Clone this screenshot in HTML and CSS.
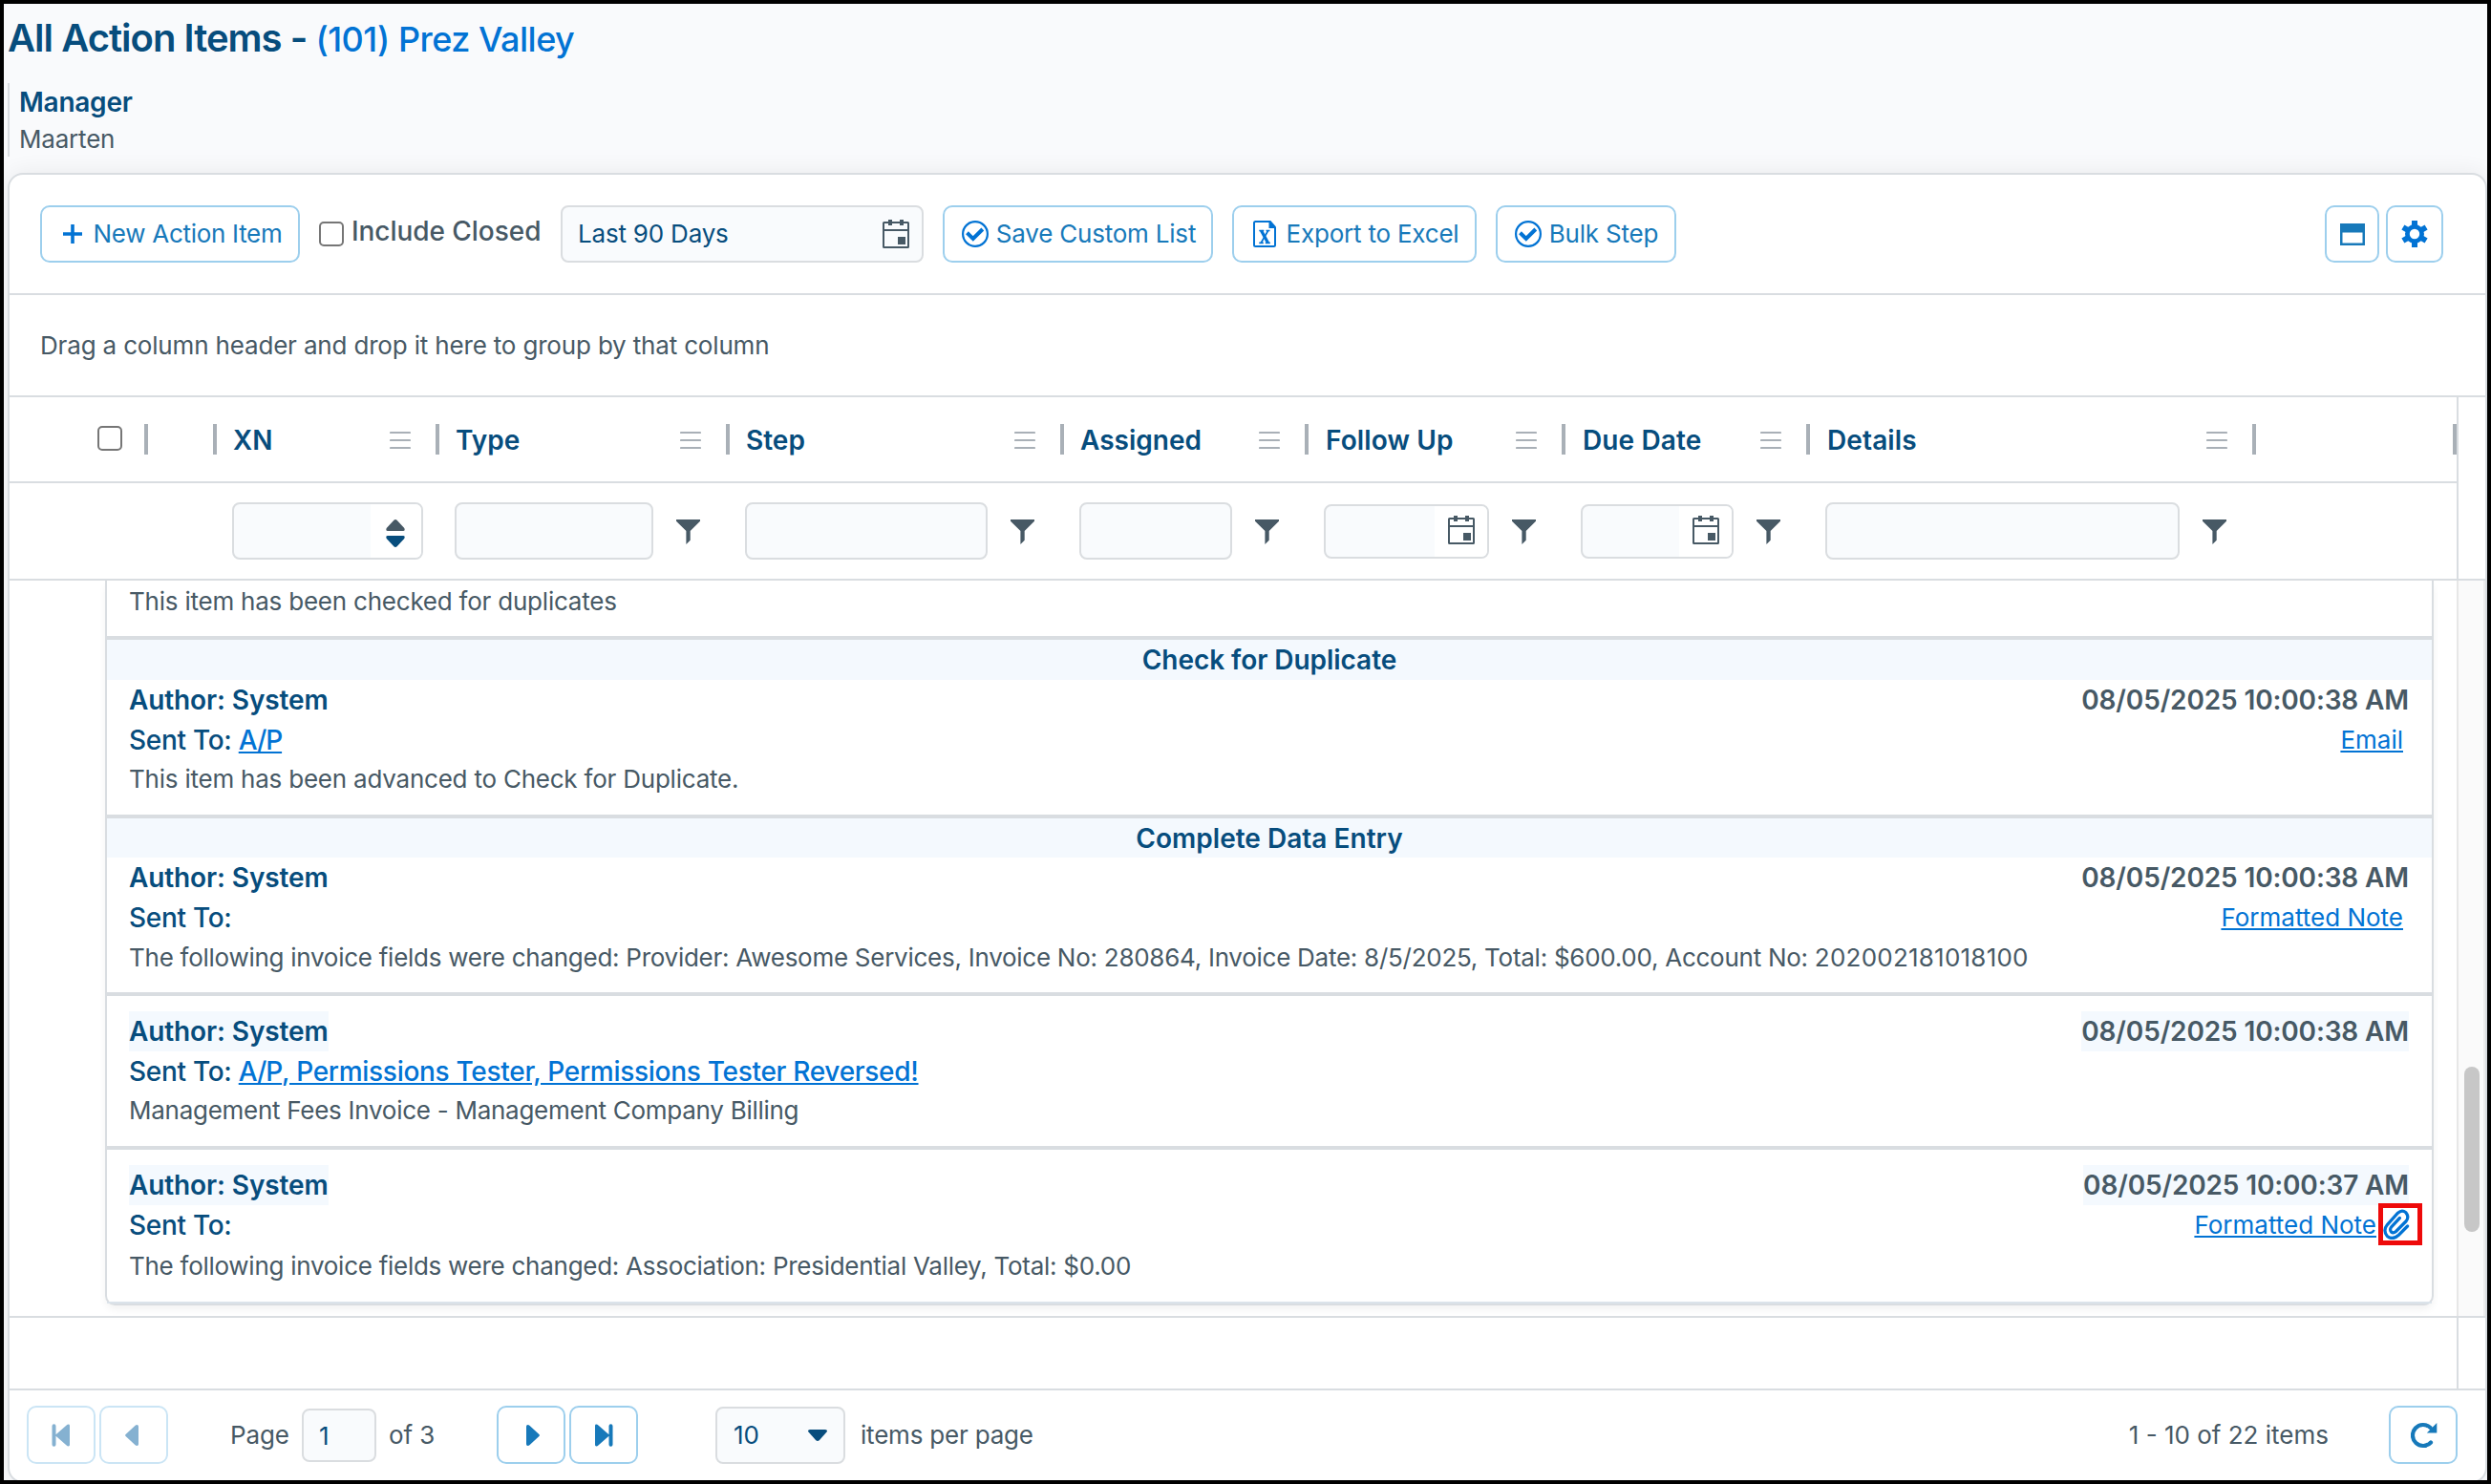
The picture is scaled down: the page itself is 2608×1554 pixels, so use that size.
FILE: index.html
```html
<!DOCTYPE html>
<html lang="en">
<head>
<meta charset="utf-8">
<title>All Action Items</title>
<link rel="stylesheet" href="styles.css">
</head>
<body>
<svg class="defs" width="0" height="0">
  <defs>
    <symbol id="cal" viewBox="0 0 28 30"><path fill-rule="evenodd" d="M1.6 2H6V0h4v2h8V0h4v2h4.4A1.6 1.6 0 0 1 28 3.600V28.400A1.600 1.600 0 0 1 26.400 30H1.600A1.600 1.600 0 0 1 0 28.400V3.600A1.600 1.600 0 0 1 1.600 2zM2 4v6h24V4h-4v2h-4V4h-8v2H6V4zM2 12v16h24V12z"/><path d="M16 18h8v8h-8z"/></symbol>
    <symbol id="check" viewBox="0 0 28 28"><circle cx="14" cy="14" r="12.900" fill="none" stroke="currentColor" stroke-width="2.200"/><path d="M5.500 12.800l6.300 6.200L21.800 9" fill="none" stroke="currentColor" stroke-width="4"/></symbol>
    <symbol id="menu" viewBox="0 0 22 20"><path d="M1 2h20M1 10h20M1 18h20" fill="none" stroke="currentColor" stroke-width="2.200" stroke-linecap="round"/></symbol>
    <symbol id="funnel" viewBox="0 0 25 26"><path d="M0 0h25v1.800L14.700 12v9.700L10.400 26V12L0 1.800z"/></symbol>
    <symbol id="tri" viewBox="0 0 14 22"><path d="M0 1.800Q0 0 1.600 0Q2.600 0 3.400.8L13.400 10q1 1 0 2L3.400 21.200Q2.600 22 1.600 22Q0 22 0 20.200z"/></symbol>
    <symbol id="end" viewBox="0 0 20 24"><path d="M0 2Q0 .6 1.300.6Q2.500.6 3.400 1.600L14.500 11.200V2.200a2 2 0 0 1 4 0v19.600a2 2 0 0 1-4 0v-9L3.400 22.400Q2.500 23.400 1.300 23.400Q0 23.400 0 22z"/></symbol>
  </defs>
</svg>
<div class="page">
  <header class="head">
    <h1 class="title">All Action Items - <span class="title-link">(101) Prez Valley</span></h1>
    <div class="manager"><div class="manager-label">Manager</div><div class="manager-name">Maarten</div></div>
  </header>
  <main class="card">
    <div class="toolbar">
      <button class="btn new"><svg width="20" height="20" viewBox="0 0 20 20"><path d="M8.200 0h3.600v8.200H20v3.600h-8.200V20H8.200v-8.200H0V8.200h8.200z"/></svg><span>New Action Item</span></button>
      <label class="include"><i class="box"></i><span>Include Closed</span></label>
      <div class="range"><span>Last 90 Days</span><svg width="28" height="30"><use href="#cal"/></svg></div>
      <button class="btn save"><svg width="28" height="28"><use href="#check"/></svg><span>Save Custom List</span></button>
      <button class="btn export"><svg width="24" height="28" viewBox="0 0 24 28"><path d="M17 1H2.500Q1 1 1 2.500v23Q1 27 2.500 27h19q1.500 0 1.500-1.500V8" fill="none" stroke="currentColor" stroke-width="2"/><path d="M16.500 0h1.800L24 6.500V8h-7.500z"/><path d="M8.500 10.500l7 12.800" fill="none" stroke="currentColor" stroke-width="3.200"/><path d="M6.300 10.500h5M13.500 10.500h4M6.300 23.300h4.500M12.800 23.300h5M15.700 10.500L8.300 23.300" fill="none" stroke="currentColor" stroke-width="1.700"/></svg><span>Export to Excel</span></button>
      <button class="btn bulk"><svg width="28" height="28"><use href="#check"/></svg><span>Bulk Step</span></button>
      <button class="btn window"><svg width="26" height="23" viewBox="0 0 26 23"><path fill-rule="evenodd" d="M0 0h26v23H0zM2.500 9.500v11h21v-11z"/></svg></button>
      <button class="btn gear"><svg width="28" height="28" viewBox="0 0 28 28"><circle cx="14" cy="14" r="7.600" fill="none" stroke="currentColor" stroke-width="4.800"/><g fill="none" stroke="currentColor" stroke-width="6" stroke-linejoin="round"><path d="M14 0v7M14 28v-7M1.900 7l6 3.500M26.100 21l-6-3.500M26.100 7l-6 3.500M1.900 21l6-3.500"/></g></svg></button>
    </div>
    <div class="group-row">Drag a column header and drop it here to group by that column</div>
    <div class="grid-head">
      <div class="cols headers">
        <div class="th th-check"><i class="box"></i></div>
        <div class="th"></div>
        <div class="th"><span>XN</span><svg width="22" height="20"><use href="#menu"/></svg></div>
        <div class="th"><span>Type</span><svg width="22" height="20"><use href="#menu"/></svg></div>
        <div class="th"><span>Step</span><svg width="22" height="20"><use href="#menu"/></svg></div>
        <div class="th"><span>Assigned</span><svg width="22" height="20"><use href="#menu"/></svg></div>
        <div class="th wide"><span>Follow Up</span><svg width="22" height="20"><use href="#menu"/></svg></div>
        <div class="th wide"><span>Due Date</span><svg width="22" height="20"><use href="#menu"/></svg></div>
        <div class="th wide"><span>Details</span><svg width="22" height="20"><use href="#menu"/></svg></div>
        <div class="th"></div>
      </div>
      <div class="cols filters">
        <div></div><div></div>
        <div class="td number"><div class="field"><div class="addon"><svg width="20" height="30" viewBox="0 0 20 30"><path d="M10 0q1 0 1.600.8L19.300 9Q20.500 12 18 12H2Q-.5 12 .7 9L8.400.8Q9 0 10 0z"/><path class="navy" d="M10 29q-1 0-1.600-.8L.7 20Q-.5 17 2 17h16q2.500 0 1.300 3l-7.700 8.200Q11 29 10 29z"/></svg></div></div></div>
        <div class="td"><div class="field"></div><svg width="25" height="26"><use href="#funnel"/></svg></div>
        <div class="td"><div class="field"></div><svg width="25" height="26"><use href="#funnel"/></svg></div>
        <div class="td"><div class="field"></div><svg width="25" height="26"><use href="#funnel"/></svg></div>
        <div class="td"><div class="field date"><div class="addon"><svg width="28" height="30"><use href="#cal"/></svg></div></div><svg width="25" height="26"><use href="#funnel"/></svg></div>
        <div class="td"><div class="field date"><div class="addon"><svg width="28" height="30"><use href="#cal"/></svg></div></div><svg width="25" height="26"><use href="#funnel"/></svg></div>
        <div class="td"><div class="field"></div><svg width="25" height="26"><use href="#funnel"/></svg></div>
        <div></div>
      </div>
    </div>
    <div class="content">
      <div class="notes">
        <section class="note first"><p class="body">This item has been checked for duplicates</p></section>
        <section class="note">
          <h2 class="step">Check for Duplicate</h2>
          <div class="row"><span class="author">Author: System</span><span class="date-text">08/05/2025 10:00:38 AM</span></div>
          <div class="row"><span class="sent">Sent To: <a><span class="ap">A/P</span></a></span><a class="kind">Email</a></div>
          <p class="body">This item has been advanced to Check for Duplicate.</p>
        </section>
        <section class="note second">
          <h2 class="step">Complete Data Entry</h2>
          <div class="row"><span class="author">Author: System</span><span class="date-text">08/05/2025 10:00:38 AM</span></div>
          <div class="row"><span class="sent">Sent To:</span><a class="kind">Formatted Note</a></div>
          <p class="body">The following invoice fields were changed: Provider: Awesome Services, Invoice No: 280864, Invoice Date: 8/5/2025, Total: $600.00, Account No: <span class="digits">202002181018100</span></p>
        </section>
        <section class="note plain">
          <div class="row"><span class="author">Author: System</span><span class="date-text">08/05/2025 10:00:38 AM</span></div>
          <div class="row"><span class="sent">Sent To: <a><span class="ap">A/P</span>, Permissions Tester, Permissions Tester Reversed!</a></span></div>
          <p class="body">Management Fees Invoice - Management Company Billing</p>
        </section>
        <section class="note plain last">
          <div class="row"><span class="author">Author: System</span><span class="date-text">08/05/2025 10:00:37 AM</span></div>
          <div class="row tall"><span class="sent">Sent To:</span><a class="kind">Formatted Note</a><span class="clip"><svg width="28" height="32" viewBox="0 0 29 32" preserveAspectRatio="none"><path d="M26.500 18L17 27.300Q10.500 33 4.500 28.500Q-.5 22.500 4.500 16.500L16 4.200Q20.500.3 24.800 3.800Q28.600 8.200 25 12.800L14 23.500Q11 26 8.800 24Q6.800 21.500 9 18.800L18 9.500" fill="none" stroke="currentColor" stroke-width="3.300" stroke-linecap="round"/></svg></span></div>
          <p class="body">The following invoice fields were changed: Association: Presidential Valley, Total: $0.00</p>
        </section>
      </div>
      <div class="scroll"><div class="thumb"></div></div>
    </div>
    <div class="grid-foot"></div>
    <footer class="pager">
      <button class="btn nav off"><svg class="flip" width="20" height="24"><use href="#end"/></svg></button>
      <button class="btn nav off prev"><svg class="flip" width="14" height="22"><use href="#tri"/></svg></button>
      <span class="page-word">Page</span><div class="page-no">1</div><span class="page-of">of 3</span>
      <button class="btn nav next"><svg width="14" height="22"><use href="#tri"/></svg></button>
      <button class="btn nav final"><svg width="20" height="24"><use href="#end"/></svg></button>
      <div class="size"><span>10</span><svg width="20" height="12" viewBox="0 0 20 12"><path d="M2 0h16q3 .3 1.500 2.600L12 11Q10 12.800 8 11L.5 2.600Q-1 .3 2 0z"/></svg></div>
      <span class="per">items per page</span>
      <span class="total">1 - 10 of 22 items</span>
      <button class="btn nav refresh"><svg width="28" height="28" viewBox="0 0 28 28"><path d="M21 21.500A11 11 0 1 1 20.500 6" fill="none" stroke="currentColor" stroke-width="4.200" stroke-linecap="round"/><path d="M27.300 1v10.500H16.800z"/></svg></button>
    </footer>
  </main>
</div>
</body>
</html>
```
FILE: styles.css
```css
* { box-sizing: border-box; }
body {
  margin: 0;
  width: 2608px;
  height: 1554px;
  overflow: hidden;
  background: #000;
  font: 400 26px/39px Inter, "Liberation Sans", sans-serif;
  color: #475965;
}
svg { display: block; fill: currentColor; flex: none; }
.defs { position: absolute; }
h1, h2, p { margin: 0; }
.page {
  width: 2600px;
  height: 1546px;
  margin: 4px;
  overflow: hidden;
  background: #f9fafc;
}
.head { height: 177px; padding: 4px 0 0 4px; }
.title { font-size: 40px; line-height: 64px; height: 79px; font-weight: 600; letter-spacing: -.990px; color: #074d7d; }
.title-link { font-size: 36px; font-weight: 500; letter-spacing: -.500px; color: #0273d4; }
.manager { border-left: 2px solid #d9dde1; height: 77px; padding: 1px 0 0 10px; }
.manager-label { font-size: 28px; line-height: 38px; font-weight: 600; letter-spacing: -.250px; color: #074d7d; }
.manager-name { line-height: 39px; letter-spacing: -.200px; }

.card {
  width: 2596px;
  height: 1372px;
  margin-left: 4px;
  border: 2px solid #d9dde1;
  border-radius: 16px;
  background: #fff;
  box-shadow: 0 0 24px rgba(0, 0, 0, .07);
  display: flex;
  flex-direction: column;
  overflow: hidden;
}
.card > * { flex: none; }
.toolbar {
  height: 126px;
  border-bottom: 2px solid #d9dde1;
  padding: 0 44px 0 32px;
  display: flex;
  align-items: center;
}
.btn {
  height: 60px;
  padding: 0;
  display: flex;
  align-items: center;
  justify-content: center;
  border: 2px solid #9dcfed;
  border-radius: 10px;
  background: #fff;
  color: #0273d4;
  font: inherit;
  line-height: 36px;
  letter-spacing: -.210px;
  white-space: nowrap;
}
.btn span { color: #1779ba; }
.new { width: 272px; gap: 12px; padding-left: 5px; letter-spacing: -.290px; }
.include { margin-left: 20px; width: 253px; display: flex; align-items: center; gap: 8px; font-size: 28px; font-weight: 500; letter-spacing: -.050px; white-space: nowrap; }
.include span { position: relative; top: -3px; }
.box { width: 26px; height: 26px; border: 2px solid #767676; border-radius: 5px; background: #fff; flex: none; }
.range, .field, .page-no, .size {
  border: 2px solid #dadde0;
  border-radius: 8px;
  background: #f9fbfd;
  color: #074d7d;
}
.range { width: 380px; height: 60px; padding: 0 13px 0 16px; display: flex; align-items: center; justify-content: space-between; letter-spacing: -.200px; }
.range span { margin-top: -2px; }
.range svg { color: #475965; }
.save { width: 283px; margin-left: 20px; gap: 8px; padding-left: 2px; }
.export { width: 256px; margin-left: 20px; gap: 11px; padding-left: 3px; }
.bulk { width: 189px; margin-left: 20px; gap: 8px; padding-left: 1px; }
.window { width: 57px; margin-left: auto; color: #1779ba; }
.gear { width: 60px; margin-left: 7px; }

.group-row { height: 107px; border-bottom: 2px solid #d9dde1; padding-left: 32px; line-height: 105px; letter-spacing: -.170px; }

.grid-head { height: 192px; border-bottom: 2px solid #d9dde1; padding-right: 28px; }
.cols {
  display: grid;
  grid-template-columns: 145px 72px 233px 304px 350px 256px 269px 256px 467px 210px;
  width: 2564px;
  border-right: 2px solid #d9dde1;
}
.headers { height: 90px; border-bottom: 2px solid #d9dde1; }
.th {
  display: flex;
  align-items: center;
  justify-content: space-between;
  padding: 2px 25px 0 17px;
  position: relative;
  font-size: 28px;
  font-weight: 600;
  color: #074d7d;
}
.wide { padding-left: 18px; letter-spacing: .120px; }
.th svg { color: #a9b0b7; }
.th::after { content: ""; position: absolute; right: 0; top: 28px; width: 4px; height: 32px; background: #a9b0b7; }
.th svg { margin-right: 5px; }
.th-check { padding: 0 0 2px 92px; }
.filters { height: 100px; }
.td { display: flex; align-items: center; justify-content: space-between; padding: 0 31px 0 16px; }
.td > svg { color: #475965; margin-top: 2px; }
.field { width: calc(100% - 49px); height: 60px; overflow: hidden; display: flex; justify-content: flex-end; color: #475965; }
.number { padding-right: 17px; }
.number .field { width: 100%; }
.date { height: 57px; margin-top: 1px; }
.addon { background: #fff; display: flex; align-items: center; justify-content: center; width: 55px; }
.number .addon { width: 53px; padding: 6px 1px 0 0; }
.date .addon svg { margin-top: -3px; }
.navy { fill: #074d7d; }

.content { height: 772px; border-bottom: 2px solid #d9dde1; overflow: hidden; display: flex; justify-content: space-between; padding-left: 100px; }
.notes {
  width: 2438px;
  height: 759px;
  border: 2px solid #d9dde1;
  border-top: 0;
  border-radius: 0 0 10px 10px;
  box-shadow: 0 5px 8px -1px rgba(0, 0, 0, .06);
}
.note { height: 187px; border-bottom: 4px solid #d9dde1; }
.first { height: 62px; padding-top: 2px; }
.second { height: 186px; }
.plain { height: 161px; padding-top: 16px; }
.last { height: 161px; border-bottom: 2px solid #dbe3ea; }
.step { height: 42px; background: #f4f9fe; text-align: center; font-size: 28px; line-height: 42px; font-weight: 600; letter-spacing: -.050px; color: #074d7d; }
.second .step { height: 41px; letter-spacing: .020px; }
.row { display: flex; height: 42px; line-height: 42px; padding: 0 24px 0 23px; font-size: 28px; white-space: nowrap; }
.author { font-weight: 600; letter-spacing: -.120px; color: #074d7d; }
.date-text { margin-left: auto; font-weight: 600; letter-spacing: -.140px; }
.plain .author, .plain .date-text { background: #f4f9fe; }
.sent { font-weight: 500; letter-spacing: -.290px; color: #074d7d; }
.ap { letter-spacing: -1.100px; }
.row a { color: #0273d4; text-decoration: underline; }
.kind { margin: 0 6px 0 auto; font-size: 26px; }
.body { padding-left: 23px; white-space: nowrap; letter-spacing: -.220px; }
.second .body { padding-top: 1px; letter-spacing: -.265px; }
.digits { letter-spacing: .230px; }
.plain .body { letter-spacing: -.270px; }
.tall { height: 44px; }
.tall .kind { margin-right: 2px; }
.clip {
  width: 46px;
  height: 44px;
  margin: -2px -14px 0 0;
  padding: 1px 0 0;
  border: 5px solid #ee0a0a;
  color: #0273d4;
}
.scroll { width: 30px; background: #fafafa; border-left: 2px solid #e7e7e7; border-right: 2px solid #ececec; padding: 509px 0 0 6px; }
.thumb { width: 16px; height: 173px; border-radius: 8px; background: #c7c7c7; }
.grid-foot { height: 74px; width: 2564px; border-right: 2px solid #d9dde1; }

.pager { height: 97px; border-top: 2px solid #d9dde1; padding: 0 29px 2px 18px; display: flex; align-items: center; white-space: nowrap; letter-spacing: -.100px; }
.nav { width: 72px; height: 61px; margin-right: 4px; color: #1779ba; }
.off { border-color: #cbe5f5; color: #85b1d1; padding-right: 2px; }
.prev { padding-right: 4px; }
.next { padding-left: 4px; }
.final { padding-left: 2px; }
.flip { transform: scaleX(-1); }
.page-word { margin-left: 61px; width: 75px; }
.page-no { width: 78px; height: 56px; line-height: 54px; padding-left: 16px; }
.page-of { margin-left: 13px; width: 113px; }
.size { width: 136px; height: 60px; margin-left: 77px; padding: 0 17px; display: flex; align-items: center; justify-content: space-between; }
.per { margin-left: 16px; letter-spacing: -.200px; }
.total { margin-left: auto; margin-right: 63px; letter-spacing: 0; }
.refresh { margin-right: 0; padding-left: 2px; }
```
